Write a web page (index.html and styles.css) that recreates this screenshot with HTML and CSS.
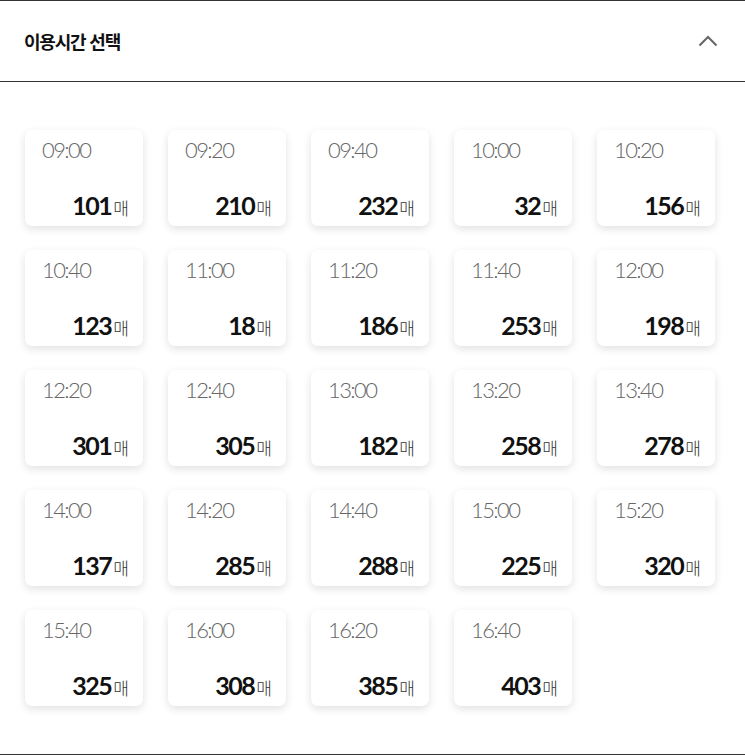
FILE: index.html
```html
<!DOCTYPE html>
<html lang="ko">
<head>
<meta charset="utf-8">
<link rel="stylesheet" href="styles.css">
</head>
<body>
<section class="panel">
  <header class="panel-head">
    <h2 class="panel-title">이용시간 선택</h2>
    <svg class="chevron" width="20" height="12" viewBox="0 0 20 12"><path d="M1.5 10.5 L10 2 L18.5 10.5" fill="none" stroke="#666" stroke-width="2"/></svg>
  </header>
  <div class="slots">
    <div class="slot"><span class="time">09:00</span><span class="count"><b>101</b>매</span></div>
    <div class="slot"><span class="time">09:20</span><span class="count"><b>210</b>매</span></div>
    <div class="slot"><span class="time">09:40</span><span class="count"><b>232</b>매</span></div>
    <div class="slot"><span class="time">10:00</span><span class="count"><b>32</b>매</span></div>
    <div class="slot"><span class="time">10:20</span><span class="count"><b>156</b>매</span></div>
    <div class="slot"><span class="time">10:40</span><span class="count"><b>123</b>매</span></div>
    <div class="slot"><span class="time">11:00</span><span class="count"><b>18</b>매</span></div>
    <div class="slot"><span class="time">11:20</span><span class="count"><b>186</b>매</span></div>
    <div class="slot"><span class="time">11:40</span><span class="count"><b>253</b>매</span></div>
    <div class="slot"><span class="time">12:00</span><span class="count"><b>198</b>매</span></div>
    <div class="slot"><span class="time">12:20</span><span class="count"><b>301</b>매</span></div>
    <div class="slot"><span class="time">12:40</span><span class="count"><b>305</b>매</span></div>
    <div class="slot"><span class="time">13:00</span><span class="count"><b>182</b>매</span></div>
    <div class="slot"><span class="time">13:20</span><span class="count"><b>258</b>매</span></div>
    <div class="slot"><span class="time">13:40</span><span class="count"><b>278</b>매</span></div>
    <div class="slot"><span class="time">14:00</span><span class="count"><b>137</b>매</span></div>
    <div class="slot"><span class="time">14:20</span><span class="count"><b>285</b>매</span></div>
    <div class="slot"><span class="time">14:40</span><span class="count"><b>288</b>매</span></div>
    <div class="slot"><span class="time">15:00</span><span class="count"><b>225</b>매</span></div>
    <div class="slot"><span class="time">15:20</span><span class="count"><b>320</b>매</span></div>
    <div class="slot"><span class="time">15:40</span><span class="count"><b>325</b>매</span></div>
    <div class="slot"><span class="time">16:00</span><span class="count"><b>308</b>매</span></div>
    <div class="slot"><span class="time">16:20</span><span class="count"><b>385</b>매</span></div>
    <div class="slot"><span class="time">16:40</span><span class="count"><b>403</b>매</span></div>
  </div>
</section>
</body>
</html>
```
FILE: styles.css
```css
* { box-sizing: border-box; }
html, body { margin: 0; padding: 0; background: #fff; }
body { font-family: Lato, "Noto Sans CJK KR", sans-serif; color: #111; }

.panel {
  width: 745px;
  border-top: 1px solid #333;
  border-bottom: 1px solid #333;
}

.panel-head {
  height: 81px;
  border-bottom: 1px solid #333;
  display: flex;
  align-items: center;
  justify-content: space-between;
  padding: 0 27px 0 24px;
}

.panel-title {
  margin: 0;
  font-family: "Noto Sans CJK KR", sans-serif;
  font-weight: 700;
  font-size: 18px;
  letter-spacing: -1.2px;
  color: #111;
  line-height: 1;
  padding-bottom: 1px;
}

.chevron { display: block; margin-bottom: 1px; }

.slots {
  display: grid;
  grid-template-columns: repeat(5, 118px);
  column-gap: 25px;
  row-gap: 24px;
  padding: 48px 0 48px 25px;
}

.slot {
  height: 96px;
  background: #fff;
  border-radius: 7px;
  box-shadow: 0 3px 8px rgba(0, 0, 0, 0.12);
  display: flex;
  flex-direction: column;
  justify-content: space-between;
  padding: 7px 15px 4px 17px;
}

.time {
  font-family: Lato, sans-serif;
  font-weight: 300;
  font-size: 22px;
  letter-spacing: -1.6px;
  line-height: 26px;
  color: #666;
}

.count {
  align-self: flex-end;
  font-family: "Noto Sans CJK KR", sans-serif;
  font-weight: 300;
  font-size: 17px;
  letter-spacing: -1px;
  color: #333;
  line-height: 28px;
}

.count b {
  font-family: Lato, sans-serif;
  font-weight: 700;
  font-size: 25px;
  letter-spacing: -1.5px;
  color: #111;
  margin-right: 2px;
}
```
